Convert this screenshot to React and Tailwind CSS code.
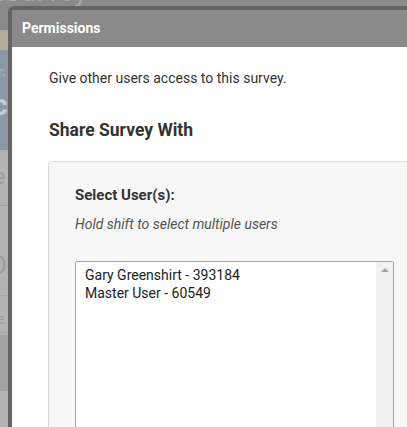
import React from "react";

const users = ["Gary Greenshirt - 393184", "Master User - 60549"];

const App = () => {
  return (
    <div
      className="relative w-[407px] h-[427px] overflow-hidden bg-[#8a8a8a]"
      style={{ fontFamily: "Roboto, 'Liberation Sans', sans-serif" }}
    >
      {/* dimmed page behind the dialog */}
      <div className="flex flex-col w-full h-full">
        <div className="h-[30px] bg-[#8a8a8a] flex justify-between overflow-hidden">
          <span className="-mt-[23px] -ml-[5px] text-[28px] leading-[30px] text-[#a9a9a9]">
            tSurvey
          </span>
          <span className="-mt-[23px] mr-[-4px] text-[22px] leading-[30px] text-[#b5b5b5]">
            D
          </span>
        </div>
        <div className="h-[20px] bg-[#b3ab9c]" />
        <div className="h-[100px] bg-[#8b98a5] flex flex-col text-[#b9c2cb]">
          <span className="mt-[14px] -ml-[2px] text-[12px] leading-[16px]">r:</span>
          <span className="mt-[10px] -ml-[8px] text-[30px] leading-[30px] font-bold text-[#c8cdd2]">
            c
          </span>
        </div>
        <div className="h-[185px] bg-[#b3b3b3] flex flex-col text-[#9d9d9d]">
          <span className="mt-[14px] -ml-[6px] text-[22px] leading-[26px]">e</span>
          <div className="mt-[15px] h-px bg-[#a5a5a5]" />
          <span className="mt-[44px] -ml-[10px] text-[26px] leading-[30px]">D</span>
          <div className="mt-[15px] h-px bg-[#a5a5a5]" />
          <span className="mt-[14px] -ml-[8px] text-[14px] leading-[18px]">re</span>
          <div className="mt-[4px] h-px bg-[#a5a5a5]" />
        </div>
        <div className="h-[55px] bg-[#a2a2a2]" />
        <div className="h-px bg-[#a5a5a5]" />
        <div className="flex-1 bg-[#b3b3b3]" />
      </div>

      {/* dialog */}
      <div className="absolute left-[8px] top-[6px] w-[460px] h-[440px] border-4 border-[#656565] rounded-tl-[6px] bg-white">
        <div className="h-[37px] bg-[#8a8a8a] flex items-center pl-[10px]">
          <span className="text-white font-bold text-[14px]">Permissions</span>
        </div>
        <div className="pl-[37px] pt-[21px]">
          <p className="text-[14px] leading-[20px] text-[#333]">
            Give other users access to this survey.
          </p>
          <h2 className="mt-[29px] text-[17.5px] leading-[26px] font-bold text-[#333]">
            Share Survey With
          </h2>
        </div>
        <div className="ml-[36px] mt-[18px] h-[300px] border border-[#dddddd] rounded-[3px] bg-[#f7f7f7] pl-[26px] pt-[22px]">
          <div className="text-[15px] leading-[22px] font-bold text-[#333]">
            Select User(s):
          </div>
          <div className="mt-[8px] text-[14px] leading-[20px] italic text-[#555]">
            Hold shift to select multiple users
          </div>
          <div className="mt-[27px] w-[319px] h-[200px] border border-[#a9a9a9] rounded-[2px] bg-white flex">
            <div className="flex-1 pl-[9px] pt-[4px] text-[14px] leading-[18px] text-[#222]">
              {users.map((u) => (
                <div key={u}>{u}</div>
              ))}
            </div>
            <div className="w-[17px] bg-[#f1f1f1] flex justify-center pt-[6px]">
              <div className="w-0 h-0 border-l-[4px] border-r-[4px] border-b-[4px] border-l-transparent border-r-transparent border-b-[#a3a3a3]" />
            </div>
          </div>
        </div>
      </div>
    </div>
  );
};

export default App;
